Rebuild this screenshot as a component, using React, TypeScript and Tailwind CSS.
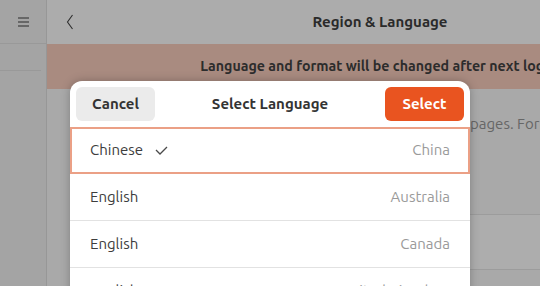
import React from "react";

const rows = [
  { lang: "Chinese", region: "China", selected: true },
  { lang: "English", region: "Australia" },
  { lang: "English", region: "Canada" },
  { lang: "English", region: "United Kingdom" },
];

export default function App() {
  return (
    <div
      className="relative w-[540px] h-[286px] overflow-hidden flex bg-[#a9a9a9]"
      style={{ fontFamily: "'Ubuntu', 'Lato', 'Noto Sans', sans-serif" }}
    >
      <aside className="w-[47px] shrink-0 bg-[#a4a4a4] border-r border-[#979797] flex flex-col">
        <div className="h-[44px] border-b border-[#999999] flex items-center justify-end pr-[17px]">
          <svg width="11" height="10" viewBox="0 0 11 10" className="text-[#2b2b2b]">
            <path d="M0 1h11M0 5h11M0 9h11" stroke="currentColor" strokeWidth="1.2" />
          </svg>
        </div>
        <div className="h-[27px] border-b border-[#999999] mr-[5px]" />
      </aside>

      <main className="w-[666px] shrink-0 flex flex-col">
        <header className="h-[44px] bg-[#acacac] grid grid-cols-[1fr_auto_1fr] items-center">
          <div className="pl-[19px] flex items-center">
            <svg width="8" height="16" viewBox="0 0 8 16" className="text-[#2e2e2e]">
              <path d="M6.5 1L1.5 8L6.5 15" fill="none" stroke="currentColor" strokeWidth="1.1" />
            </svg>
          </div>
          <h1 className="text-[15px] font-bold text-[#2a2a2a]">Region &amp; Language</h1>
          <div />
        </header>
        <div className="h-[45px] bg-[#a98b80] flex items-center justify-center text-[14.2px] font-bold text-[#2c2c2c] whitespace-nowrap">
          Language and format will be changed after next login.
        </div>
        <div className="flex-1 bg-[#a9a9a9] flex flex-col">
          <p className="mt-[24px] text-[15px] text-[#666666] whitespace-nowrap flex">
            <span className="w-[423px] shrink-0 overflow-hidden text-right">
              Select the language used for text in windows and web&nbsp;
            </span>
            <span>pages. Formats are used for dates, times and numbers.</span>
          </p>
          <div className="mt-[78px] mx-[34px] h-[56px] bg-[#adadad] border-y border-[#9c9c9c]" />
        </div>
      </main>

      <div className="absolute left-[70px] top-[81px] w-[400px] h-[260px] bg-white rounded-[12px] shadow-[0_0_10px_rgba(0,0,0,0.25)] flex flex-col overflow-hidden">
        <div className="h-[46px] px-[6px] flex items-center justify-between">
          <button className="w-[79px] h-[34px] rounded-[6px] bg-[#ebebeb] text-[15px] font-bold text-[#333333]">
            Cancel
          </button>
          <span className="text-[15px] font-bold text-[#333333]">Select Language</span>
          <button className="w-[79px] h-[34px] rounded-[6px] bg-[#e95420] text-[15px] font-bold text-white">
            Select
          </button>
        </div>
        <ul className="flex flex-col">
          {rows.map((r, i) => (
            <li
              key={i}
              className={
                r.selected
                  ? "h-[47px] border-2 border-[#eba086] flex items-center justify-between pl-[18px] pr-[18px]"
                  : "h-[47px] border-b border-[#e2e2e2] flex items-center justify-between px-[20px]"
              }
            >
              <span className="flex items-center gap-[12px] text-[15px] text-[#3d3d3d]">
                {r.lang}
                {r.selected && (
                  <svg width="13" height="9" viewBox="0 0 13 9" className="text-[#4a4a4a]">
                    <path d="M1 4L5 8L12 1" fill="none" stroke="currentColor" strokeWidth="1.3" />
                  </svg>
                )}
              </span>
              <span className="text-[15px] text-[#9a9a9a]">{r.region}</span>
            </li>
          ))}
        </ul>
      </div>
    </div>
  );
}
